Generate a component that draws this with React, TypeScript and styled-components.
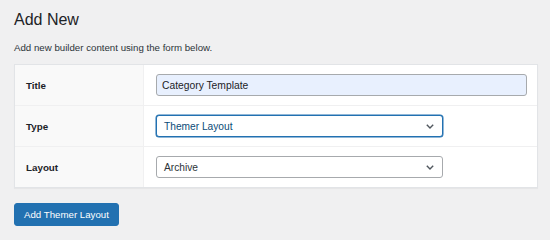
import styled, { createGlobalStyle } from 'styled-components';

const GlobalStyle = createGlobalStyle`
    html, body {
        margin: 0;
        padding: 0;
        background: #f0f0f1;
        font-family: "Liberation Sans", Arial, sans-serif;
        color: #1d2327;
    }
`;

const Page = styled.div`
    padding: 10px 12px 0 14px;
`;

const Heading = styled.h1`
    margin: 0 0 12px;
    font-size: 16px;
    font-weight: 400;
    line-height: 19px;
    color: #1d2327;
`;

const Description = styled.p`
    margin: 0 0 10px;
    font-size: 9.7px;
    line-height: 13px;
    color: #2c3338;
`;

const Card = styled.div`
    width: 524px;
    box-sizing: border-box;
    background: #fff;
    border: 1px solid #e2e4e7;
    box-shadow: 0 1px 1px rgba(0, 0, 0, 0.04);
`;

const Row = styled.div`
    display: grid;
    grid-template-columns: 129px 1fr;
    height: 40px;
    & + & {
        border-top: 1px solid #f0f0f1;
    }
`;

const Label = styled.div`
    display: flex;
    align-items: center;
    padding-left: 11px;
    background: #f9f9f9;
    border-right: 1px solid #f0f0f1;
    font-size: 9.8px;
    font-weight: 700;
    color: #1d2327;
`;

const Field = styled.div`
    display: flex;
    align-items: center;
    padding: 0 10px 0 12px;
`;

const TextInput = styled.input`
    width: 100%;
    height: 22px;
    box-sizing: border-box;
    margin: 0;
    padding: 0 5px;
    border: 1px solid #a7aaad;
    border-radius: 3px;
    background: #e8f0fe;
    font-family: inherit;
    font-size: 10.3px;
    color: #1d2327;
    outline: none;
`;

const SelectBox = styled.div<{ $focused?: boolean }>`
    display: flex;
    align-items: center;
    justify-content: space-between;
    width: 287px;
    height: 22px;
    box-sizing: border-box;
    padding: 0 8px 0 7px;
    border: 1px solid ${(p) => (p.$focused ? '#2271b1' : '#a7aaad')};
    box-shadow: ${(p) => (p.$focused ? '0 0 0 0.5px #2271b1' : 'none')};
    border-radius: 3px;
    background: #fff;
    font-size: 10.2px;
    color: ${(p) => (p.$focused ? '#0a4b78' : '#2c3338')};
    cursor: pointer;
`;

const Button = styled.button`
    margin-top: 15px;
    height: 23px;
    padding: 0 9px;
    border: 1px solid #2271b1;
    border-radius: 3px;
    background: #2271b1;
    color: #fff;
    font-family: inherit;
    font-size: 9.7px;
    cursor: pointer;
`;

const Chevron = () => (
    <svg width="8" height="5" viewBox="0 0 8 5" fill="none">
        <path d="M0.8 0.8 L4 4 L7.2 0.8" stroke="#50575e" strokeWidth="1.4" />
    </svg>
);

export default function App() {
    return (
        <>
            <GlobalStyle />
            <Page>
                <Heading>Add New</Heading>
                <Description>Add new builder content using the form below.</Description>
                <Card>
                    <Row>
                        <Label>Title</Label>
                        <Field>
                            <TextInput defaultValue="Category Template" />
                        </Field>
                    </Row>
                    <Row>
                        <Label>Type</Label>
                        <Field>
                            <SelectBox $focused>
                                <span>Themer Layout</span>
                                <Chevron />
                            </SelectBox>
                        </Field>
                    </Row>
                    <Row>
                        <Label>Layout</Label>
                        <Field>
                            <SelectBox>
                                <span>Archive</span>
                                <Chevron />
                            </SelectBox>
                        </Field>
                    </Row>
                </Card>
                <Button>Add Themer Layout</Button>
            </Page>
        </>
    );
}
